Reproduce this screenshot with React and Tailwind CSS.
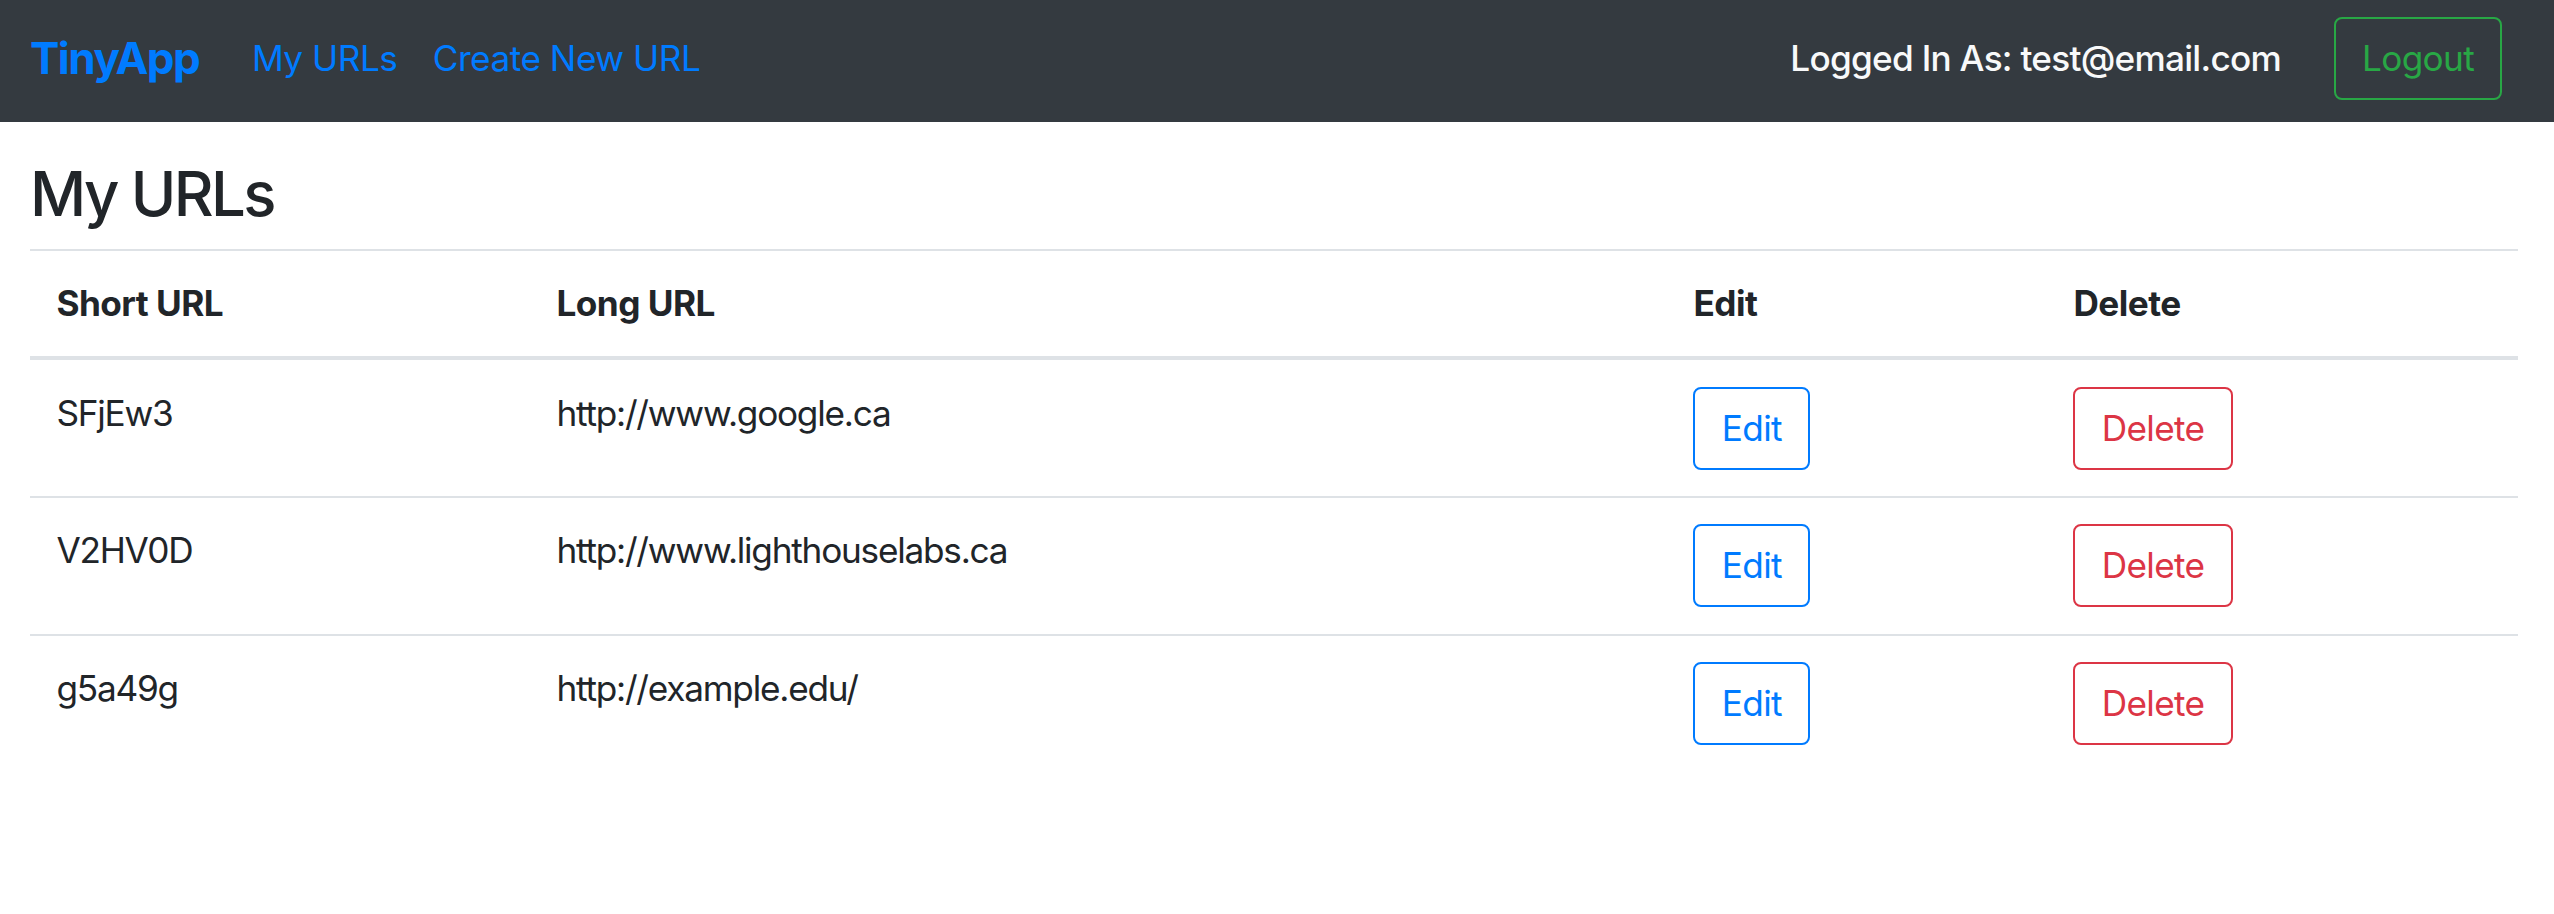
import React from 'react';

const rows = [
  { short: 'SFjEw3', long: 'http://www.google.ca' },
  { short: 'V2HV0D', long: 'http://www.lighthouselabs.ca' },
  { short: 'g5a49g', long: 'http://example.edu/' },
];

const App = () => {
  return (
    <div className="min-h-screen bg-white text-[#212529] tracking-[-0.03em] font-['Inter','Liberation_Sans',sans-serif]">
      {/* navbar */}
      <nav className="flex h-[122px] items-center bg-[#343a40] pb-[6px] pl-[30px] pr-[52px]">
        <a className="mr-[35px] text-[44px] font-bold leading-[66px] tracking-[-0.034em] text-[#007bff]">TinyApp</a>
        <a className="px-[17.6px] text-[35.2px] leading-[52.8px] text-[#007bff]">My URLs</a>
        <a className="px-[17.6px] text-[35.2px] leading-[52.8px] text-[#007bff]">Create New URL</a>
        <span className="ml-auto mr-[53px] text-[35.2px] font-medium leading-[52.8px] tracking-[-0.021em] text-[#f8f9fa]">
          Logged In As: test@email.com
        </span>
        <button className="h-[83px] w-[168px] rounded-[8px] border-2 border-[#28a745] text-[35.2px] leading-[52.8px] tracking-[-0.019em] text-[#28a745]">
          Logout
        </button>
      </nav>

      <main className="pl-[30px] pr-[36px] pt-[35px]">
        <h3 className="mb-[17.6px] text-[61.6px] font-medium leading-[74px] tracking-[-0.042em]">My URLs</h3>
        <table className="w-full table-fixed border-collapse text-left text-[35.2px] leading-[52.8px]">
          <colgroup>
            <col className="w-[500px]" />
            <col className="w-[1137px]" />
            <col className="w-[380px]" />
            <col />
          </colgroup>
          <thead>
            <tr>
              <th className="border-t-2 border-b-4 border-[#dee2e6] p-[26.4px] align-bottom font-bold tracking-[-0.015em]">Short URL</th>
              <th className="border-t-2 border-b-4 border-[#dee2e6] p-[26.4px] align-bottom font-bold tracking-[-0.015em]">Long URL</th>
              <th className="border-t-2 border-b-4 border-[#dee2e6] p-[26.4px] align-bottom font-bold tracking-[-0.015em]">Edit</th>
              <th className="border-t-2 border-b-4 border-[#dee2e6] p-[26.4px] align-bottom font-bold tracking-[-0.015em]">Delete</th>
            </tr>
          </thead>
          <tbody>
            {rows.map((r) => (
              <tr key={r.short}>
                <td className="border-t-2 border-[#dee2e6] p-[26.4px] align-top tracking-[-0.035em]">{r.short}</td>
                <td className="border-t-2 border-[#dee2e6] p-[26.4px] align-top tracking-[-0.035em]">{r.long}</td>
                <td className="border-t-2 border-[#dee2e6] p-[26.4px] align-top">
                  <button className="h-[83px] rounded-[8px] border-2 border-[#007bff] px-[26.4px] tracking-[-0.019em] text-[#007bff]">
                    Edit
                  </button>
                </td>
                <td className="border-t-2 border-[#dee2e6] p-[26.4px] align-top">
                  <button className="h-[83px] rounded-[8px] border-2 border-[#dc3545] px-[26.4px] tracking-[-0.019em] text-[#dc3545]">
                    Delete
                  </button>
                </td>
              </tr>
            ))}
          </tbody>
        </table>
      </main>
    </div>
  );
};

export default App;
